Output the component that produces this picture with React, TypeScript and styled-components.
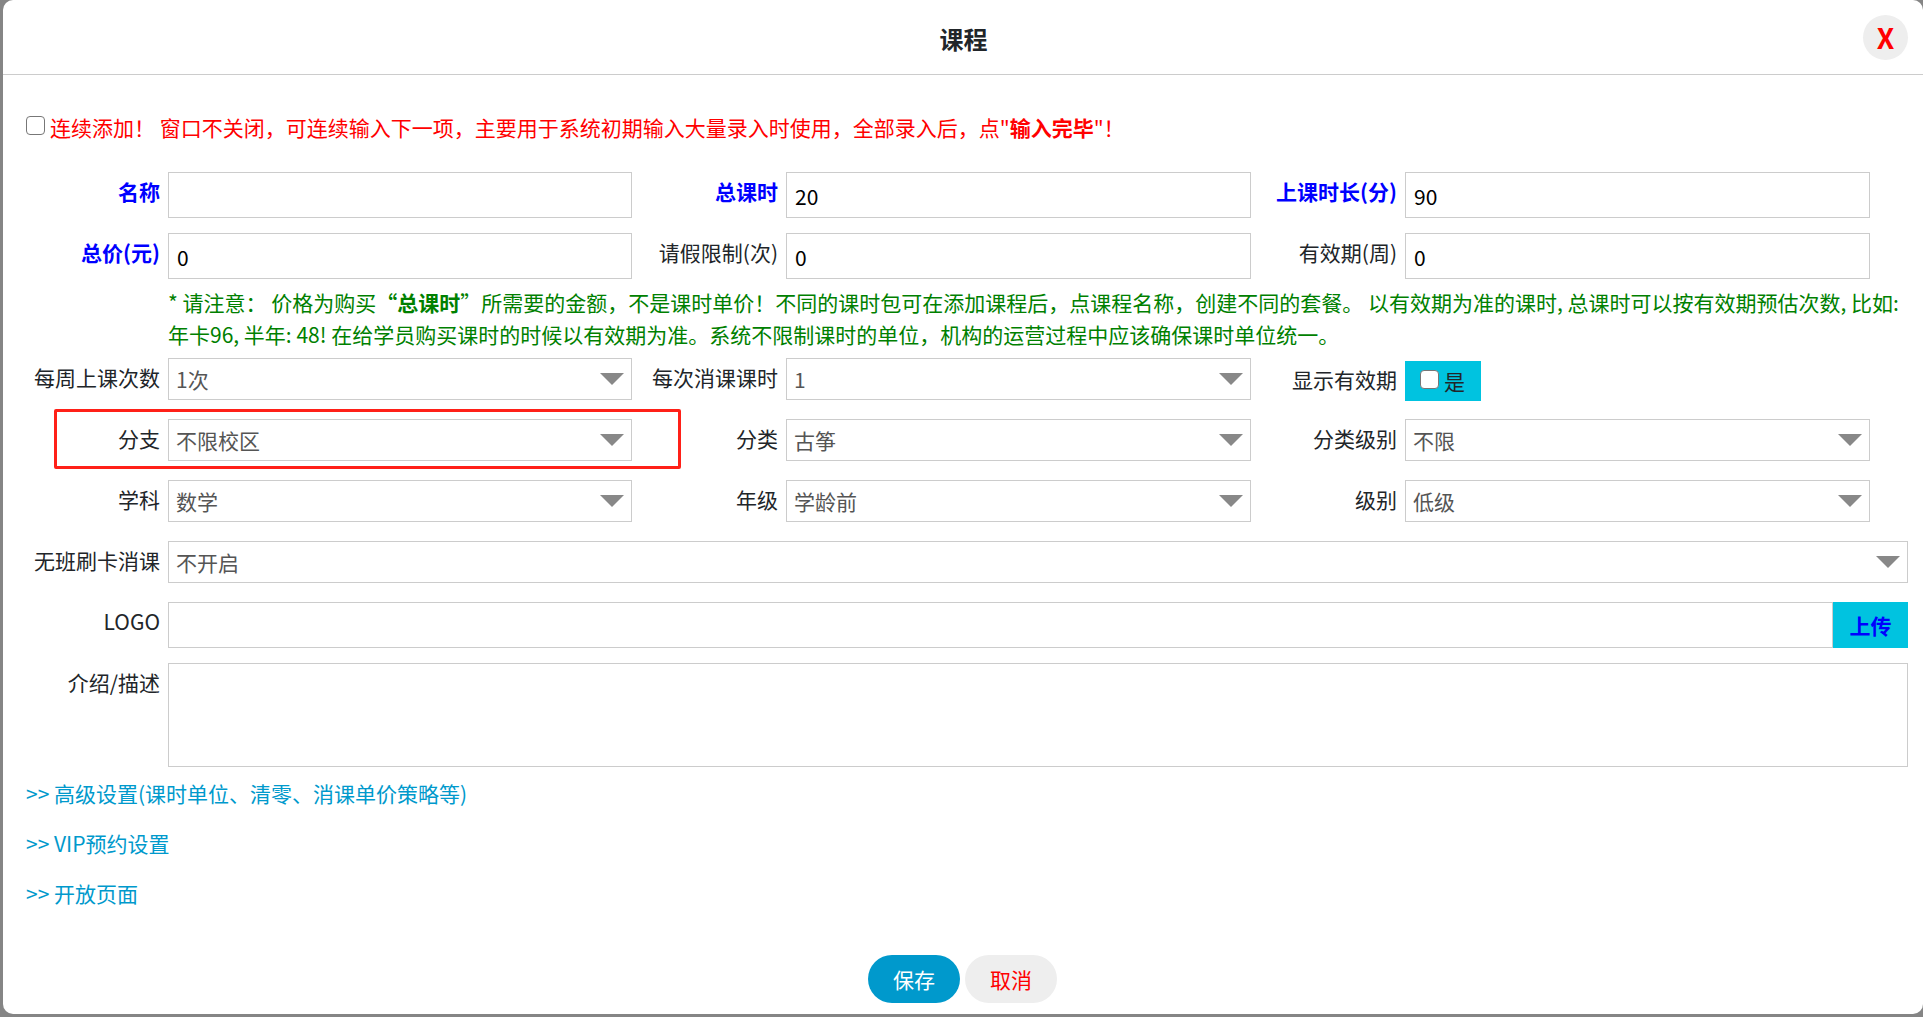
import styled, { createGlobalStyle } from "styled-components";

const GlobalStyle = createGlobalStyle`
  html, body {
    margin: 0;
    padding: 0;
    height: 100%;
    background: #858585;
    overflow: hidden;
  }
  body, input, select, textarea, button {
    font-family: "Noto Sans CJK SC", "Noto Sans", sans-serif;
  }
`;

const Modal = styled.div`
  box-sizing: border-box;
  margin-left: 3px;
  height: 1014px;
  background: #fff;
  border-radius: 10px;
  font-size: 21px;
  color: #212529;
`;

const Header = styled.div`
  position: relative;
  height: 74px;
  display: flex;
  align-items: center;
  justify-content: center;
  border-bottom: 1px solid #ccc;
`;

const Title = styled.h5`
  margin: 0;
  font-size: 24px;
  font-weight: 700;
  color: #212529;
  padding-left: 1px;
  position: relative;
  top: 1px;
`;

const CloseButton = styled.button`
  position: absolute;
  top: 15px;
  right: 15px;
  width: 45px;
  height: 45px;
  padding: 0;
  border: 0;
  border-radius: 50%;
  background: #eee;
  color: #f00;
  font-size: 28px;
  font-weight: 700;
  line-height: 45px;
`;

const Body = styled.div`
  padding: 0 15px 0 23px;
`;

const Notice = styled.div`
  display: flex;
  align-items: center;
  height: 32px;
  margin-top: 36px;
  margin-bottom: 29px;
  color: #f00;
`;

const Check = styled.input.attrs({ type: "checkbox" })`
  flex: none;
  box-sizing: border-box;
  width: 19px;
  height: 19px;
  margin: 0 5px 0 0;
  position: relative;
  top: -2px;
  appearance: none;
  background: #fff;
  border: 1.5px solid #777;
  border-radius: 4px;
`;

const Grid = styled.div<{ $gap: number }>`
  display: grid;
  grid-template-columns: 606px 607px 607px;
  column-gap: 12px;
  margin-bottom: ${(p) => p.$gap}px;
`;

const Field = styled.div`
  position: relative;
  display: flex;
  align-items: flex-start;
`;

const Label = styled.label<{ $required?: boolean; $drop?: number }>`
  flex: none;
  width: 134px;
  margin-top: ${(p) => p.$drop ?? 0}px;
  margin-right: 8px;
  text-align: right;
  line-height: 38px;
  white-space: nowrap;
  color: ${(p) => (p.$required ? "#00f" : "#212529")};
  font-weight: ${(p) => (p.$required ? 700 : 400)};
`;

const TextInput = styled.input`
  box-sizing: border-box;
  flex: 1;
  min-width: 0;
  height: 46px;
  padding: 1px 7px 0 8px;
  border: 1px solid #ccc;
  border-radius: 0;
  background: #fff;
  color: #000;
  font-size: 21px;
  outline: none;
`;

const SelectWrap = styled.div`
  position: relative;
  flex: 1;
  min-width: 0;
  height: 42px;
  &::after {
    content: "";
    position: absolute;
    right: 8px;
    top: 15px;
    border-style: solid;
    border-width: 12px 12px 0;
    border-color: #888 transparent transparent;
    pointer-events: none;
  }
`;

const Select = styled.select`
  box-sizing: border-box;
  display: block;
  width: 100%;
  height: 42px;
  padding: 0 7px;
  border: 1px solid #ccc;
  border-radius: 0;
  background: #fff;
  color: #555;
  font-size: 21px;
  appearance: none;
  outline: none;
`;

const Hint = styled.div`
  margin: 7px 0 8px 142px;
  color: #008000;
  line-height: 32px;
`;

const Toggle = styled.label`
  display: flex;
  align-items: center;
  box-sizing: border-box;
  width: 76px;
  height: 40px;
  margin-top: 3px;
  padding-left: 15px;
  background: #00c3e0;
  color: #212529;
`;

const UploadRow = styled.div`
  display: flex;
  flex: 1;
  min-width: 0;
`;

const UploadButton = styled.button`
  flex: none;
  width: 75px;
  height: 46px;
  padding: 0;
  border: 0;
  border-radius: 0;
  background: #00c3e0;
  color: #00f;
  font-size: 21px;
  font-weight: 700;
`;

const Textarea = styled.textarea`
  box-sizing: border-box;
  display: block;
  flex: 1;
  min-width: 0;
  height: 104px;
  padding: 7px;
  border: 1px solid #ccc;
  border-radius: 0;
  font-size: 21px;
  resize: none;
  outline: none;
`;

const WideRow = styled.div<{ $gap: number }>`
  display: flex;
  align-items: flex-start;
  margin-bottom: ${(p) => p.$gap}px;
`;

const LinkRow = styled.a`
  display: block;
  height: 50px;
  line-height: 50px;
  color: #0099cc;
  text-decoration: none;
`;

const Footer = styled.div`
  display: flex;
  justify-content: center;
  gap: 5px;
  margin-top: 37px;
  padding-right: 9px;
`;

const PillButton = styled.button<{ $primary?: boolean }>`
  width: 92px;
  height: 48px;
  padding: 0;
  border: 0;
  border-radius: 24px;
  background: ${(p) => (p.$primary ? "#0099cc" : "#eee")};
  color: ${(p) => (p.$primary ? "#fff" : "#f00")};
  font-size: 21px;
`;

const Highlight = styled.div`
  position: absolute;
  left: 28px;
  right: -49px;
  top: -10px;
  bottom: -8px;
  border: 3px solid #ff2018;
  border-radius: 2px;
  pointer-events: none;
`;

const inputRows = [
  [
    { label: "名称", value: "", required: true },
    { label: "总课时", value: "20", required: true },
    { label: "上课时长(分)", value: "90", required: true },
  ],
  [
    { label: "总价(元)", value: "0", required: true },
    { label: "请假限制(次)", value: "0" },
    { label: "有效期(周)", value: "0" },
  ],
];

const links = ["高级设置(课时单位、清零、消课单价策略等)", "VIP预约设置", "开放页面"];

function SelectField({ label, value, children }: { label: string; value: string; children?: React.ReactNode }) {
  return (
    <Field>
      <Label>{label}</Label>
      <SelectWrap>
        <Select defaultValue={value}>
          <option>{value}</option>
        </Select>
      </SelectWrap>
      {children}
    </Field>
  );
}

const App = () => {
  return (
    <>
      <GlobalStyle />
      <Modal>
        <Header>
          <Title>课程</Title>
          <CloseButton>X</CloseButton>
        </Header>
        <Body>
          <Notice>
            <Check />
            <span>
              连续添加！ 窗口不关闭，可连续输入下一项，主要用于系统初期输入大量录入时使用，全部录入后，点"<b>输入完毕</b>"！
            </span>
          </Notice>

          {inputRows.map((row, i) => (
            <Grid key={i} $gap={i === 0 ? 15 : 0}>
              {row.map((f) => (
                <Field key={f.label}>
                  <Label $required={f.required}>{f.label}</Label>
                  <TextInput defaultValue={f.value} />
                </Field>
              ))}
            </Grid>
          ))}

          <Hint>
            * 请注意： 价格为购买<b>“总课时</b>”所需要的金额，不是课时单价！不同的课时包可在添加课程后，点课程名称，创建不同的套餐。 以有效期为准的课时, 总课时可以按有效期预估次数, 比如: 年卡96, 半年: 48! 在给学员购买课时的时候以有效期为准。系统不限制课时的单位，机构的运营过程中应该确保课时单位统一。
          </Hint>

          <Grid $gap={18}>
            <SelectField label="每周上课次数" value="1次" />
            <SelectField label="每次消课课时" value="1" />
            <Field>
              <Label $drop={2}>显示有效期</Label>
              <Toggle>
                <Check />是
              </Toggle>
            </Field>
          </Grid>
          <Grid $gap={19}>
            <SelectField label="分支" value="不限校区">
              <Highlight />
            </SelectField>
            <SelectField label="分类" value="古筝" />
            <SelectField label="分类级别" value="不限" />
          </Grid>
          <Grid $gap={19}>
            <SelectField label="学科" value="数学" />
            <SelectField label="年级" value="学龄前" />
            <SelectField label="级别" value="低级" />
          </Grid>

          <WideRow $gap={19}>
            <Label>无班刷卡消课</Label>
            <SelectWrap>
              <Select defaultValue="不开启">
                <option>不开启</option>
              </Select>
            </SelectWrap>
          </WideRow>
          <WideRow $gap={15}>
            <Label>LOGO</Label>
            <UploadRow>
              <TextInput />
              <UploadButton>上传</UploadButton>
            </UploadRow>
          </WideRow>
          <WideRow $gap={1}>
            <Label>介绍/描述</Label>
            <Textarea />
          </WideRow>

          {links.map((t) => (
            <LinkRow key={t} href="#">
              &gt;&gt; {t}
            </LinkRow>
          ))}

          <Footer>
            <PillButton $primary>保存</PillButton>
            <PillButton>取消</PillButton>
          </Footer>
        </Body>
      </Modal>
    </>
  );
};

export default App;
